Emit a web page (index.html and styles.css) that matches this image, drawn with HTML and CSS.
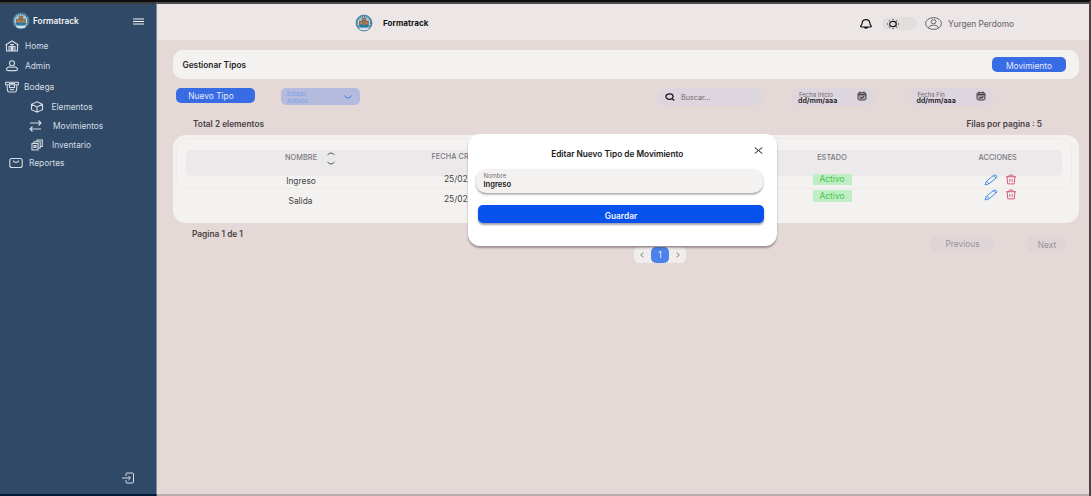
FILE: index.html
```html
<!DOCTYPE html>
<html lang="es">
<head>
<meta charset="utf-8">
<title>Formatrack</title>
<link rel="stylesheet" href="styles.css">
</head>
<body>
<svg class="defs" aria-hidden="true">
  <symbol id="logo" viewBox="0 0 18 18">
    <circle cx="9" cy="9" r="7.900" fill="#b9d5dc" stroke="#557f92" stroke-width="1"/>
    <circle cx="9" cy="9" r="6.900" fill="none" stroke="#26799e" stroke-width="1.500" stroke-dasharray="1.300 .7"/>
    <circle cx="9" cy="8.600" r="5.300" fill="#a8c6cc"/>
    <path d="M7.300 4h3.400v3H7.300zM4.500 7.300h3.800v3.200H4.500zM9.500 7.300h3.800v3.200H9.500z" fill="#bd7c49" stroke="#675950" stroke-width=".7"/>
    <path d="M3.500 11h11l-1.500 2.500H5z" fill="#287ca3"/>
    <path d="M4.500 13.500q4.500 2 9 0v1.700q-4.500 2-9 0z" fill="#dce9e9"/>
  </symbol>
  <symbol id="calendar" viewBox="0 0 10 10">
    <rect x="1" y="1.700" width="8" height="7.300" rx="1.400" fill="#aaa3aa" stroke="#484549" stroke-width="1"/>
    <path d="M1 3.700h8M3 .5v2M7 .5v2" stroke="#484549" stroke-width="1.200"/>
    <path d="M3 7q2 .3 4-1.700" stroke="#333" stroke-width="1.100" fill="none"/>
  </symbol>
  <symbol id="pencil" viewBox="0 0 14 12">
    <path d="M1 11l1.200-3.500 6.800-5.700q1.600-1.300 3.200-.4 1.300 1.300-.2 2.700L5 9.800zM2.200 7.500q1.800.2 2.800 2.300M9 1.800q2 .3 3 2.300"/>
  </symbol>
  <symbol id="trash" viewBox="0 0 12 12">
    <path d="M.5 3h11M3.500 3l.7-1.800h3.600L8.500 3M1.700 3l.8 7.800h7L10.300 3M4.700 5.500v3M7.300 5.500v3"/>
  </symbol>
</svg>
<div class="screen">
  <aside class="sidebar">
    <div class="brand">
      <svg class="logo"><use href="#logo"/></svg>
      <strong>Formatrack</strong>
      <svg class="burger" viewBox="0 0 11 7"><path d="M0 1h11M0 3.500h11M0 6h11"/></svg>
    </div>
    <nav class="nav">
      <a class="item"><svg viewBox="0 0 14 12"><path d="M.5 5L7 1l6.500 4M1.500 4.500V11h11V4.500M4 11V6.500h2V11M8 11V6.500h2V11M5 4.500h4M7 4v7"/></svg>Home</a>
      <a class="item"><svg viewBox="0 0 14 12"><circle cx="7" cy="3.300" r="2.500"/><path d="M4.500 6.700Q1.500 7.500 1.500 9.300q0 1.300 2 1.300h7q2 0 2-1.300 0-1.800-3-2.600-2.500 1.200-5 0z"/></svg>Admin</a>
      <a class="item bodega"><svg viewBox="0 0 14 12"><path d="M.7 1.300h12.600v2.500H.7zM2 4l.6 5.700q.2 1.300 1.500 1.300h5.800q1.300 0 1.500-1.300L12 4M4.500 4v2.500h5V4M5 8q2 1.500 4 0M4 2.500h6"/></svg>Bodega</a>
      <a class="item sub"><svg viewBox="0 0 14 12"><path d="M7 .8l5.500 2.500v5.400L7 11.200 1.500 8.700V3.300zM1.500 3.300L7 6l5.500-2.700M7 6v5.200"/></svg>Elementos</a>
      <a class="item sub movimientos"><svg viewBox="0 0 14 12"><path d="M2 3h11M10.500.5L13 3l-2.500 2.500M13 9H2M4.500 6.500L2 9l2.500 2.500"/></svg>Movimientos</a>
      <a class="item sub inventario"><svg viewBox="0 0 14 12"><path d="M2 4.500h6V11H2zM4 4.500V2.800h6.200V9H8M7 2.800V1h5.300v6.500h-2M4 6.500h2v2H4z"/></svg>Inventario</a>
      <a class="item reportes"><svg viewBox="0 0 14 12"><rect x=".8" y="1.500" width="12.400" height="9" rx="2"/><path d="M4 3.700q3 3.500 6 0"/></svg>Reportes</a>
    </nav>
    <svg class="logout" viewBox="0 0 14 12"><path d="M5 4V2q0-1 1-1h5.500q1 0 1 1v8q0 1-1 1H6q-1 0-1-1V8M1 6h8M7.300 3.800L9.500 6 7.300 8.200"/></svg>
  </aside>
  <main class="main">
    <header class="topbar">
      <svg class="logo"><use href="#logo"/></svg>
      <strong>Formatrack</strong>
      <svg class="bell" viewBox="0 0 14 12"><path d="M1.800 8Q3 6.800 3.200 4.800 3.600 1.700 7 1.700t3.800 3.100Q11 6.800 12.200 8q.6 1-.8 1H2.600q-1.400 0-.8-1zM5 9.300q2 1.700 4 0"/></svg>
      <span class="toggle"><svg viewBox="0 0 14 12"><ellipse cx="7" cy="6" rx="3.300" ry="2.700"/><path d="M7 1.300v.8M7 9.900v.8M1 6h1M12 6h1M3 2.700l.6.500M11 2.700l-.6.500M3 9.300l.6-.5M11 9.300l-.6-.5"/></svg></span>
      <svg class="avatar" viewBox="0 0 17 13"><ellipse cx="8.500" cy="6.500" rx="7.900" ry="5.900"/><ellipse cx="8.500" cy="4.700" rx="2.500" ry="2"/><path d="M3.500 10.800Q4.500 8 8.500 8t5 2.800"/></svg>
      <span class="user">Yurgen Perdomo</span>
    </header>
    <section class="title-card"><h1>Gestionar Tipos</h1><button class="blue">Movimiento</button></section>
    <section class="filters">
      <button class="blue new">Nuevo Tipo</button>
      <div class="state"><span>Estado<br>Activos</span><svg viewBox="0 0 8 4"><path d="M.5.5Q2 3 4 3T7.500.5"/></svg></div>
      <div class="search"><svg viewBox="0 0 10 8"><ellipse cx="4.500" cy="3.600" rx="3.600" ry="2.800"/><path d="M7 5.700l2.300 1.700"/></svg>Buscar...</div>
      <div class="date"><span><small>Fecha Inicio</small><b>dd/mm/aaa</b></span><svg><use href="#calendar"/></svg></div>
      <div class="date end"><span><small>Fecha Fin</small><b>dd/mm/aaa</b></span><svg><use href="#calendar"/></svg></div>
    </section>
    <section class="summary"><span class="total">Total 2 elementos</span><span class="rows">Filas por pagina : 5</span></section>
    <section class="table">
      <div class="head-band"></div>
      <div class="col name"><h2>NOMBRE <svg viewBox="0 0 8 13"><path d="M.5 3Q4-1 7.500 3M.5 10Q4 14 7.500 10"/></svg></h2><span>Ingreso</span><span>Salida</span></div>
      <div class="col created"><h2>FECHA CREACION</h2><span>25/02/24</span><span>25/02/24</span></div>
      <div class="col status"><h2>ESTADO</h2><em>Activo</em><em class="second">Activo</em></div>
      <div class="col actions"><h2>ACCIONES</h2>
        <div class="icons"><svg class="edit"><use href="#pencil"/></svg><svg class="delete"><use href="#trash"/></svg></div>
        <div class="icons"><svg class="edit"><use href="#pencil"/></svg><svg class="delete"><use href="#trash"/></svg></div>
      </div>
    </section>
    <footer class="footer">
      <span class="page-info">Pagina 1 de 1</span>
      <div class="pager"><svg viewBox="0 0 4 6"><path d="M3.500.7L.7 3l2.800 2.300"/></svg><b>1</b><svg viewBox="0 0 4 6"><path d="M.5.7L3.300 3 .5 5.300"/></svg></div>
      <button class="step">Previous</button><button class="step next">Next</button>
    </footer>
  </main>
  <div class="modal" role="dialog">
    <svg class="close" viewBox="0 0 9 7"><path d="M.7.500l7.600 6M8.300.500l-7.600 6"/></svg>
    <h3>Editar Nuevo Tipo de Movimiento</h3>
    <div class="field"><small>Nombre</small><b>Ingreso</b></div>
    <button class="save">Guardar</button>
  </div>
</div>
</body>
</html>
```
FILE: styles.css
```css
* { box-sizing: border-box; }
body { margin: 0; font: 8.4px/12px Inter, "Liberation Sans", sans-serif; background: #e5d9d8; color: #444; }
h1, h2, h3 { margin: 0; font-size: inherit; }
button { border: 0; padding: 0; font: inherit; }
svg { fill: none; stroke: currentColor; flex: none; }
.defs { position: absolute; width: 0; height: 0; }
.screen { position: relative; width: 1091px; height: 496px; display: grid; grid-template-columns: 157px 1fr; border-top: 2px solid #0d0c0c; border-right: 2px solid #484647; overflow: hidden; }
.sidebar { display: flex; flex-direction: column; background: #304966; color: #d5dce4; border-top: 2px solid #3b3a3b; border-right: 1px solid #7e8797; border-bottom: 2px solid #001b3c; }
.brand { display: flex; align-items: center; height: 32px; padding: 2px 12px 0 12px; color: #f3f5f8; }
.logo { width: 18px; height: 18px; stroke: none; }
.brand strong { margin-left: 3px; font-size: 8.3px; font-weight: 600; }
.burger { width: 11px; height: 7px; margin-left: auto; }
.nav { display: flex; flex-direction: column; }
.item { display: flex; align-items: center; gap: 6px; height: 20px; padding-left: 5px; font-size: 8.35px; }
.item svg { width: 14px; height: 12px; stroke-width: 1.1; }
.bodega { height: 21px; gap: 5px; }
.sub { height: 19px; padding-left: 30px; gap: 7.5px; }
.movimientos { padding-left: 28px; gap: 11px; }
.inventario { height: 20px; gap: 8px; }
.reportes { height: 16px; padding-left: 9px; }
.logout { width: 14px; height: 12px; margin: auto 0 10px 121px; }
.main { min-width: 0; border-top: 2px solid #504d4e; border-bottom: 2px solid #b8aeae; }
.topbar { height: 36px; display: flex; align-items: center; padding: 2px 0 0 198px; background: #ece6e6; color: #151515; }
.topbar strong { width: 46px; margin-left: 10px; font-size: 8.15px; font-weight: 700; }
.bell { width: 14px; height: 12px; margin: 1px 0 0 430px; stroke-width: 1.2; }
.toggle { width: 35px; height: 13px; margin: 1px 0 0 9px; border-radius: 7px; background: #e0dfde; padding-left: 4px; display: flex; align-items: center; }
.toggle svg { width: 14px; height: 12px; stroke-width: 1.2; }
.avatar { width: 17px; height: 13px; margin: 1px 0 0 8px; color: #656268; }
.user { margin: 1px 0 0 6px; font-size: 8.25px; font-weight: 500; color: #737077; }
.title-card { height: 29px; margin: 10px 10px 0 16px; padding: 0 13px 0 9.5px; display: flex; align-items: center; justify-content: space-between; border-radius: 10px; background: #f3f2f0; }
.title-card h1 { font-size: 8.3px; font-weight: 600; color: #262626; }
.blue { height: 15px; width: 74px; border-radius: 5px; color: #e4eaff; background: #386ce4; }
.title-card .blue { padding-top: 2px; }
.filters { height: 18px; margin: 9px 0 0 19px; display: flex; }
.new { width: 79px; padding-right: 9px; }
.state { width: 79px; height: 17px; margin-left: 26px; padding: 0 8px 0 6px; border-radius: 5px; background: #b5bbdd; color: #799eeb; display: flex; align-items: center; justify-content: space-between; font-size: 6px; line-height: 7px; }
.state span { padding-top: 1px; }
.state svg { width: 8px; height: 4px; color: #3e7ae0; }
.search { width: 106px; height: 18px; margin-left: 297px; padding: 2px 0 0 8px; border-radius: 9px; background: #ded6de; color: #706b71; display: flex; align-items: center; gap: 6px; font-size: 7.2px; }
.search svg { width: 10px; height: 8px; margin-top: -2px; color: #161416; stroke-width: 1.3; }
.date { width: 84px; height: 18px; margin-left: 28px; padding: 1px 8px 0 7px; border-radius: 9px; background: #ded6de; display: flex; align-items: center; justify-content: space-between; }
.date.end { margin-left: 35px; padding-left: 6.5px; }
.date span { display: flex; flex-direction: column; }
.date small { font-size: 6px; line-height: 6px; color: #6f6a70; padding-left: 1px; }
.date b { font-size: 7.1px; line-height: 7px; font-weight: 600; color: #181618; margin-top: -1px; }
.date svg { width: 10px; height: 10px; margin-top: -3px; }
.summary { height: 29px; padding: 12px 47px 0 36px; display: flex; justify-content: space-between; font-size: 8.3px; font-weight: 600; color: #484344; }
.table { position: relative; height: 88px; margin: 0 10px 0 16px; border-radius: 13px; background: #f3f2f0; display: grid; grid-template: 88px / 218px 380px 122px 186px; }
.table::after { content: ""; position: absolute; inset: 3px 7px 34px 3px; border: 1px solid rgba(100, 90, 100, .045); border-radius: 10px; }
.head-band { grid-area: 1 / 1 / 2 / 5; height: 26px; margin: 15px 17px 0 13px; border-radius: 5px; background: #ebe9ea; }
.col { grid-row: 1; display: flex; flex-direction: column; z-index: 1; }
.col h2 { font-size: 7.3px; font-weight: 500; line-height: 12px; color: #7b787f; letter-spacing: .07px; }
.name { grid-column: 1; padding: 16px 0 0 112px; }
.name h2 { display: flex; align-items: center; gap: 10px; height: 14px; }
.name h2 svg { width: 8px; height: 13px; color: #555; }
.name span { width: 30px; margin: 10px 0 0 1px; text-align: center; }
.name span + span { width: 29px; margin-top: 8px; }
.created { grid-column: 2; padding: 16px 0 0 40.5px; }
.created span { margin: 10px 0 0 12.5px; }
.created span + span { margin-top: 8px; }
.status { grid-column: 3; align-items: center; padding: 17px 0 0; }
.status h2 { height: 21px; }
.status em { width: 39px; height: 11px; margin-top: 1px; background: #bfeec5; color: #41c744; font-style: normal; line-height: 10px; text-align: center; }
.status .second { height: 12px; line-height: 13px; margin-top: 5px; }
.actions { grid-column: 4; align-items: center; padding: 17px 0 0 23px; }
.actions h2 { height: 20px; transform: none; margin-right: 0; }
.actions h2 { width: 38px; align-self: flex-start; margin-left: 63px; }
.icons { display: flex; align-items: center; gap: 7px; height: 15px; align-self: flex-start; margin-left: 68px; }
.edit { width: 14px; height: 12px; color: #4891e5; }
.delete { width: 12px; height: 11px; color: #d44b75; }
.actions { padding-left: 22.5px; }
.actions h2, .icons { position: static; }
.footer { height: 42px; padding-left: 35px; display: flex; align-items: flex-start; }
.page-info { width: 442px; padding-top: 5px; font-size: 8.35px; font-weight: 600; color: #4b4547; }
.pager { width: 52px; height: 16px; margin-top: 24px; border-radius: 5px; background: #f0edec; display: flex; align-items: center; justify-content: space-between; padding: 0 6px; color: #88848b; }
.pager b { width: 18px; height: 16px; border-radius: 5px; background: #4d82e9; color: #e4edff; font-weight: 400; line-height: 16px; text-align: center; }
.pager svg { width: 4px; height: 6px; }
.step { width: 65px; height: 16px; margin: 13px 0 0 244px; border-radius: 7px; background: #dfd5d7; color: #98939a; }
.next { width: 40px; margin-left: 32px; padding-top: 2px; }
.modal { position: absolute; left: 468px; top: 132px; width: 309px; height: 112px; z-index: 2; border-radius: 12px; background: #fff; box-shadow: 0 2px 2px rgba(70, 55, 60, .45); padding: 14px 13px 0 7.5px; color: #181818; }
.close { position: absolute; width: 9px; height: 7px; right: 14px; top: 13px; }
.modal h3 { font-size: 8.28px; font-weight: 600; text-align: center; padding-right: 5px; }
.field { width: 287px; height: 24px; margin-top: 9px; padding: 4px 8px; border-radius: 10px; background: #f4f1f1; box-shadow: 0 1.5px 2px rgba(80, 70, 75, .5); display: flex; flex-direction: column; }
.field small { font-size: 6px; line-height: 6px; color: #777078; }
.field b { font-size: 7.6px; line-height: 12px; font-weight: 600; }
.save { display: block; width: 286px; height: 18px; margin: 12px 0 0 2.5px; padding-top: 4px; border-radius: 5px; background: #0752ed; box-shadow: 0 1.5px 2px rgba(50, 50, 80, .45); color: #eef2ff; font-size: 8.3px; font-weight: 600; }
```
